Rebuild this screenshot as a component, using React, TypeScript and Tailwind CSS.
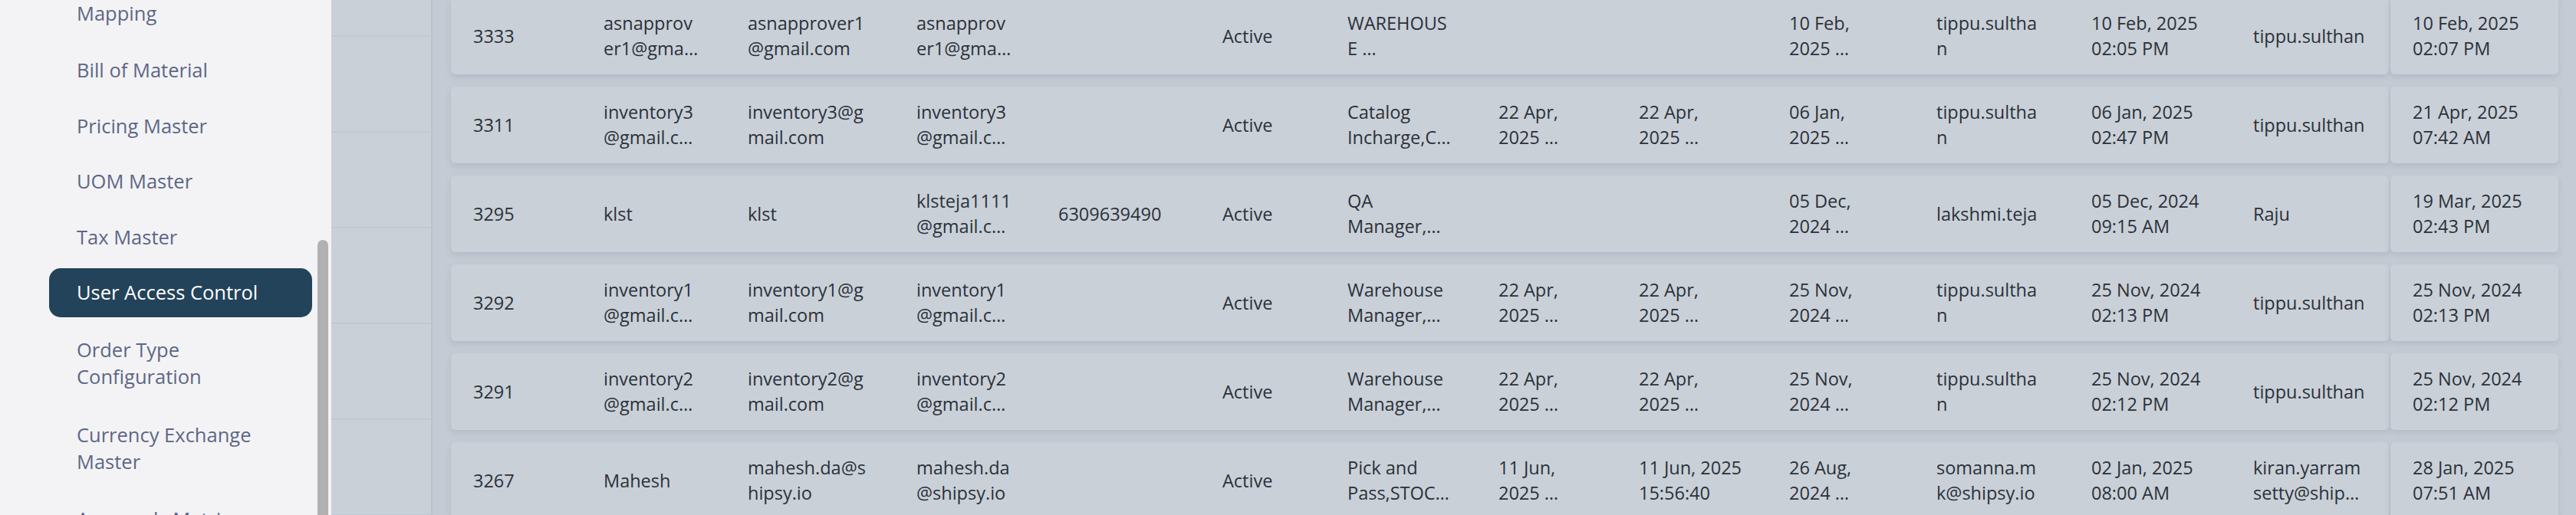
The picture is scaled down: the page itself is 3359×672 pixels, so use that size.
import React from "react";

type Row = { id: string; cells: string[][]; last: string[] };

const MENU: { label: string[]; active?: boolean }[] = [
  { label: ["Storage Bin", "Mapping"] },
  { label: ["Bill of Material"] },
  { label: ["Pricing Master"] },
  { label: ["UOM Master"] },
  { label: ["Tax Master"] },
  { label: ["User Access Control"], active: true },
  { label: ["Order Type", "Configuration"] },
  { label: ["Currency Exchange", "Master"] },
  { label: ["Approvals Matrix"] },
];

const ROWS: Row[] = [
  {
    id: "3333",
    cells: [
      ["asnapprov", "er1@gma…"],
      ["asnapprover1", "@gmail.com"],
      ["asnapprov", "er1@gma…"],
      [],
      ["Active"],
      ["WAREHOUS", "E …"],
      [],
      [],
      ["10 Feb,", "2025 …"],
      ["tippu.sultha", "n"],
      ["10 Feb, 2025", "02:05 PM"],
      ["tippu.sulthan"],
    ],
    last: ["10 Feb, 2025", "02:07 PM"],
  },
  {
    id: "3311",
    cells: [
      ["inventory3", "@gmail.c…"],
      ["inventory3@g", "mail.com"],
      ["inventory3", "@gmail.c…"],
      [],
      ["Active"],
      ["Catalog", "Incharge,C…"],
      ["22 Apr,", "2025 …"],
      ["22 Apr,", "2025 …"],
      ["06 Jan,", "2025 …"],
      ["tippu.sultha", "n"],
      ["06 Jan, 2025", "02:47 PM"],
      ["tippu.sulthan"],
    ],
    last: ["21 Apr, 2025", "07:42 AM"],
  },
  {
    id: "3295",
    cells: [
      ["klst"],
      ["klst"],
      ["klsteja1111", "@gmail.c…"],
      ["6309639490"],
      ["Active"],
      ["QA", "Manager,…"],
      [],
      [],
      ["05 Dec,", "2024 …"],
      ["lakshmi.teja"],
      ["05 Dec, 2024", "09:15 AM"],
      ["Raju"],
    ],
    last: ["19 Mar, 2025", "02:43 PM"],
  },
  {
    id: "3292",
    cells: [
      ["inventory1", "@gmail.c…"],
      ["inventory1@g", "mail.com"],
      ["inventory1", "@gmail.c…"],
      [],
      ["Active"],
      ["Warehouse", "Manager,…"],
      ["22 Apr,", "2025 …"],
      ["22 Apr,", "2025 …"],
      ["25 Nov,", "2024 …"],
      ["tippu.sultha", "n"],
      ["25 Nov, 2024", "02:13 PM"],
      ["tippu.sulthan"],
    ],
    last: ["25 Nov, 2024", "02:13 PM"],
  },
  {
    id: "3291",
    cells: [
      ["inventory2", "@gmail.c…"],
      ["inventory2@g", "mail.com"],
      ["inventory2", "@gmail.c…"],
      [],
      ["Active"],
      ["Warehouse", "Manager,…"],
      ["22 Apr,", "2025 …"],
      ["22 Apr,", "2025 …"],
      ["25 Nov,", "2024 …"],
      ["tippu.sultha", "n"],
      ["25 Nov, 2024", "02:12 PM"],
      ["tippu.sulthan"],
    ],
    last: ["25 Nov, 2024", "02:12 PM"],
  },
  {
    id: "3267",
    cells: [
      ["Mahesh"],
      ["mahesh.da@s", "hipsy.io"],
      ["mahesh.da", "@shipsy.io"],
      [],
      ["Active"],
      ["Pick and", "Pass,STOC…"],
      ["11 Jun,", "2025 …"],
      ["11 Jun, 2025", "15:56:40"],
      ["26 Aug,", "2024 …"],
      ["somanna.m", "k@shipsy.io"],
      ["02 Jan, 2025", "08:00 AM"],
      ["kiran.yarram", "setty@ship…"],
    ],
    last: ["28 Jan, 2025", "07:51 AM"],
  },
];

function Cell({ lines }: { lines: string[] }) {
  return (
    <div className="whitespace-nowrap leading-[33px]">
      {lines.map((l, i) => (
        <div key={i}>{l}</div>
      ))}
    </div>
  );
}

function Sidebar() {
  return (
    <aside className="relative h-[672px] w-[432px] shrink-0 overflow-hidden bg-[#f3f3f5]">
      <nav className="-mt-[52px] ml-[64px] mr-[25px] flex flex-col gap-[8.5px]">
        {MENU.map((m, i) => (
          <div
            key={i}
            className={[
              "rounded-[15px] pl-[36px] text-[25.5px] leading-[35px]",
              m.label.length > 1 ? "py-[16.5px]" : "py-[14.5px]",
              m.active ? "bg-[#23435a] text-white" : "text-[#5e6786]",
            ].join(" ")}
          >
            {m.label.map((l, j) => (
              <div key={j}>{l}</div>
            ))}
          </div>
        ))}
      </nav>
      {/* scrollbar thumb */}
      <div className="absolute left-[414px] top-[313px] h-[400px] w-[14px] rounded-full bg-[#b1b1b3]" />
    </aside>
  );
}

export default function App() {
  return (
    <div className="flex h-[672px] w-[3359px] overflow-hidden bg-[#c4cbd4] font-['Open_Sans',sans-serif] text-[23.5px] text-[#2c3138]">
      <Sidebar />

      {/* frozen column behind */}
      <div className="h-[672px] w-[130px] shrink-0 bg-[#c9d0d8]">
        <div className="-mt-[77px] flex flex-col">
          {[0, 1, 2, 3, 4, 5, 6].map((i) => (
            <div key={i} className="h-[125px] border-b-2 border-[#c0c8d1]" />
          ))}
        </div>
      </div>
      <div className="h-[672px] w-[2px] shrink-0 bg-[#b9c3cd]" />

      <div className="ml-[24px] -mt-[3px] flex flex-col gap-[16px]">
        {ROWS.map((r) => (
          <div key={r.id} className="flex gap-[2px]">
            <div className="flex h-[100px] w-[2527px] items-center rounded-[6px] bg-[#c9d0d8] pl-[29px] shadow-[0_4px_8px_rgba(120,132,148,0.22)]">
              <div className="grid grid-cols-[170px_188px_220px_185px_214px_163px_197px_183px_196px_192px_202px_211px_177px] items-center">
                <Cell lines={[r.id]} />
                {r.cells.map((c, i) => (
                  <Cell key={i} lines={c} />
                ))}
              </div>
            </div>
            <div className="flex h-[100px] w-[219px] items-center rounded-[6px] bg-[#c9d0d8] pl-[29px] shadow-[0_4px_8px_rgba(120,132,148,0.22)]">
              <Cell lines={r.last} />
            </div>
          </div>
        ))}
      </div>
    </div>
  );
}
